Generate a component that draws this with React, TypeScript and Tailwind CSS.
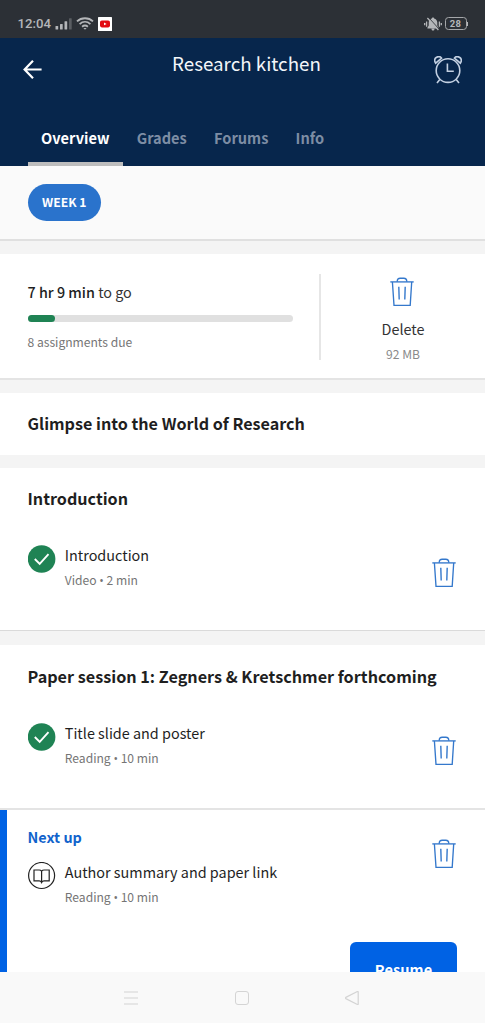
import { ReactNode } from 'react';

type IconProps = {
	className?: string;
};

const TrashIcon = ({ className = '' }: IconProps) => (
	<svg className={`w-6 h-7.5 shrink-0 ${className}`} viewBox="0 0 24 30" fill="none" stroke="#3478CC" strokeWidth="1.35">
		<path d="M0.3 4.9H23.7" />
		<path d="M2.4 5L4 28.4H20.2L21.7 5" />
		<path d="M7.2 4.7C7.2 2.3 8.3 1.2 10.2 1.2H13.8C15.7 1.2 16.8 2.3 16.8 4.7" />
		<path d="M8.8 9.8L9.2 22.6M15.2 9.8L14.8 22.6" strokeWidth="1.4" />
	</svg>
);

const CheckIcon = () => (
	<svg className="w-7 h-7 shrink-0" viewBox="0 0 28 28" fill="none">
		<circle cx="13.6" cy="14" r="13.8" fill="#1F8354" />
		<path d="M6.8 14L11.7 18.9L20.5 9.2" stroke="#fff" strokeWidth="1.9" />
	</svg>
);

const BookIcon = () => (
	<svg className="w-7 h-7 shrink-0" viewBox="0 0 28 28" fill="none" stroke="#222" strokeWidth="1.2">
		<circle cx="13.6" cy="13.5" r="13" />
		<path d="M13.6 9.1C13 8.3 12.2 8 11.1 8H6V18.8H11.1C12.3 18.8 13.1 19.4 13.6 20.5C14.1 19.4 14.9 18.8 16.1 18.8H21.2V8H16.1C15 8 14.2 8.3 13.6 9.1ZM13.6 9.1V20.5" />
	</svg>
);

const AlarmIcon = () => (
	<svg className="w-7 h-7" viewBox="0 0 28 28" fill="none" stroke="#C3D0E2" strokeWidth="1.6">
		<circle cx="14" cy="14.6" r="11.8" />
		<path d="M13.4 7.6V15.2H19.8" />
		<path d="M5.8 23.4L3 27M22.2 23.4L25 27" />
		<path d="M1.6 7.2C0.2 4.8 0.6 2.4 2.6 1.2C4.6 0.2 6.6 0.6 7.6 2.2Z" />
		<path d="M26.4 7.2C27.8 4.8 27.4 2.4 25.4 1.2C23.4 0.2 21.4 0.6 20.4 2.2Z" />
	</svg>
);

const StatusBar = () => (
	<div className="h-[38px] bg-[#2C3036] flex items-center justify-between pl-[17.5px] pr-[17.5px] pt-[9px] shrink-0">
		<div className="flex items-center">
			<span className="font-[Roboto] text-[13.2px] leading-4 font-medium text-[#B4B6B9] w-[33.5px] whitespace-nowrap">12:04</span>
			<svg className="w-[17px] h-3 ml-1" viewBox="0 0 17 12" fill="#B4B6B9">
				<rect x="0.5" y="8" width="2.7" height="3.5" rx="0.5" />
				<rect x="5" y="6" width="2.7" height="5.5" rx="0.5" />
				<rect x="9.5" y="3.3" width="2.7" height="8.2" rx="0.5" />
				<rect x="14" y="0.3" width="2.7" height="11.2" rx="0.5" fill="#5A5D62" />
			</svg>
			<svg className="w-[18px] h-[13px] ml-1" viewBox="0 0 18 13" fill="none" stroke="#B4B6B9" strokeWidth="1.8">
				<path d="M1 4.4C5.4 0.2 12.6 0.2 17 4.4" />
				<path d="M3.6 7.1C6.8 4.2 11.2 4.2 14.4 7.1" />
				<path d="M6.1 9.7C7.9 8.2 10.1 8.2 11.9 9.7" />
				<path d="M7.4 11L9 12.8L10.6 11Z" fill="#B4B6B9" stroke="none" />
			</svg>
			<svg className="w-3.5 h-3.5 ml-[4px]" viewBox="0 0 14 14">
				<rect width="14" height="14" rx="0.6" fill="#fff" />
				<rect x="2" y="3.4" width="10" height="7" rx="1.8" fill="#E20B12" />
				<path d="M6 5.5L8.6 6.9L6 8.3Z" fill="#fff" />
			</svg>
		</div>
		<div className="flex items-center">
			<svg className="w-[18px] h-3.5 mr-[3px]" viewBox="0 0 18 14">
				<path d="M9 0.5C9.7 0.5 10.1 0.9 10.1 1.4C12.1 1.9 13.3 3.5 13.3 5.6V8.6L14.6 10.8V11.4H3.4V10.8L4.7 8.6V5.6C4.7 3.5 5.9 1.9 7.9 1.4C7.9 0.9 8.3 0.5 9 0.5Z" fill="#B4B6B9" />
				<path d="M7.4 11.4H10.6C10.4 13 9.9 13.5 9 13.5C8.1 13.5 7.6 13 7.4 11.4Z" fill="#B4B6B9" />
				<path d="M0.7 6V8.3M2.6 4.6V9.7M15.4 4.6V9.7M17.3 6V8.3" stroke="#B4B6B9" strokeWidth="1.3" />
				<path d="M4.5 0.6L15.6 12.6" stroke="#2C3036" strokeWidth="1" />
				<path d="M3.4 1L14.4 13" stroke="#B4B6B9" strokeWidth="1.3" />
			</svg>
			<div className="w-[22px] h-[13px] border-[1.5px] border-[#A5A7AA] rounded-[3.5px] flex items-center justify-center font-[Roboto] text-[9.5px] leading-none font-bold tracking-[0.3px] text-[#B4B6B9]">
				28
			</div>
			<div className="w-px h-1 bg-[#B4B6B9]"></div>
		</div>
	</div>
);

const tabs = ['Overview', 'Grades', 'Forums', 'Info'];

const Header = () => (
	<header className="h-32 bg-[#07264C] flex flex-col justify-between shrink-0">
		<div className="flex justify-between items-start pl-[23px] pr-[23px] pt-3">
			<svg className="w-[19px] h-[19px] mt-[10px] mr-[17px]" viewBox="0 0 19 19" fill="none" stroke="#fff" strokeWidth="2.2">
				<path d="M18.6 9.5H2M10 0.8L1.6 9.5L10 18.2" />
			</svg>
			<h1 className="text-[18.75px] leading-[26px] text-[#F3F6FA] whitespace-nowrap">Research kitchen</h1>
			<div className="mt-[6px]">
				<AlarmIcon />
			</div>
		</div>
		<nav className="flex pl-[27.5px]">
			{tabs.map((tab, index) => (
				<a
					key={tab}
					className={`px-[13.6px] pb-[14px] text-[14.6px] leading-5 font-bold border-b-[4.5px] ${index === 0 ? 'text-white border-[#BDBDBD]' : 'text-[#7D8DA4] border-transparent'}`}
				>
					{tab}
				</a>
			))}
		</nav>
	</header>
);

type LessonProps = {
	icon: ReactNode;
	title: string;
	kind: string;
	duration: string;
};

const Lesson = ({ icon, title, kind, duration }: LessonProps) => (
	<div className="flex gap-[9.3px]">
		{icon}
		<div className="flex flex-col gap-[5px] whitespace-nowrap">
			<div className="text-[14.4px] leading-5 text-[#1F1F1F]">{title}</div>
			<div className="text-[12.1px] leading-5 text-[#757575]">
				{kind} <span className="font-['Open_Sans'] text-[12px] leading-none">•</span> {duration}
			</div>
		</div>
	</div>
);

export default function App() {
	const progress = 10.3;

	return (
		<div className="w-full h-[1023px] overflow-hidden flex flex-col bg-[#F4F4F4] font-['Noto_Sans_CJK_SC',sans-serif]">
			<StatusBar />
			<Header />

			<main className="flex-1 min-h-0 overflow-hidden">
				<div className="h-[75px] bg-[#FAFAFA] border-b-2 border-[#E0E0E0] pl-[27.5px] pt-[18px]">
					<button className="w-[73.5px] h-[36.5px] rounded-full bg-[#2A73CC] text-white text-[12.2px] leading-5 font-bold whitespace-nowrap">WEEK 1</button>
				</div>

				<section className="mt-[13px] h-[126px] bg-white border-b-2 border-[#E4E4E4] flex">
					<div className="w-[292.5px] pl-[27.5px] pt-7">
						<div className="text-[14.35px] leading-5 text-[#333] whitespace-nowrap">
							<span className="font-medium text-[#1F1F1F]">7 hr 9 min</span> to go
						</div>
						<div className="mt-[13px] h-[7px] w-[265px] rounded-full bg-[#E0E0E0]">
							<div className="h-full rounded-full bg-[#1F8354]" style={{ width: `${progress}%` }}></div>
						</div>
						<div className="mt-[10px] text-[12.1px] leading-5 text-[#757575]">8 assignments due</div>
					</div>
					<div className="ml-[26.5px] mt-5 w-0.5 h-[86px] bg-[#E6E6E6]"></div>
					<div className="flex-1 flex flex-col items-center pt-[22.5px]">
						<TrashIcon className="mr-[1.5px]" />
						<div className="mt-[12.5px] text-[14.4px] leading-5 text-[#333]">Delete</div>
						<div className="mt-[5px] text-[12.1px] leading-5 text-[#8A8A8A]">92 MB</div>
					</div>
				</section>

				<section className="mt-[13px] h-[61.5px] bg-white pl-[27.5px] pt-5">
					<h2 className="text-[16.15px] leading-5 font-bold text-[#1F1F1F]">Glimpse into the World of Research</h2>
				</section>

				<section className="mt-[13.5px] h-[163px] bg-white border-b border-[#DADADA] pl-[27.5px] pr-[29px] pt-5">
					<h2 className="text-[16.15px] leading-5 font-bold text-[#1F1F1F]">Introduction</h2>
					<div className="mt-[37px] flex justify-between">
						<Lesson icon={<CheckIcon />} title="Introduction" kind="Video" duration="2 min" />
						<TrashIcon className="mt-[13px]" />
					</div>
				</section>

				<section className="mt-3.5 h-[165px] bg-white border-b-2 border-[#E4E4E4] pl-[27.5px] pr-[29px] pt-[20.5px]">
					<h2 className="text-[16.2px] leading-5 font-bold text-[#1F1F1F] whitespace-nowrap">Paper session 1: Zegners &amp; Kretschmer forthcoming</h2>
					<div className="mt-[37px] flex justify-between">
						<Lesson icon={<CheckIcon />} title="Title slide and poster" kind="Reading" duration="10 min" />
						<TrashIcon className="mt-[13px]" />
					</div>
				</section>

				<section className="h-[200px] bg-white border-l-[7px] border-[#0062E4] pl-[20.5px] pr-[28px] pt-[17px]">
					<div className="flex justify-between">
						<div>
							<div className="text-[14.4px] leading-5 font-bold text-[#1163CC]">Next up</div>
							<div className="mt-[14.5px]">
								<Lesson icon={<BookIcon />} title="Author summary and paper link" kind="Reading" duration="10 min" />
							</div>
						</div>
						<TrashIcon className="mt-3 mr-px" />
					</div>
					<div className="mt-[35.5px] flex justify-end">
						<button className="w-[107px] h-14 rounded-md bg-[#0062E4] text-white text-[14.6px] leading-5 font-bold">Resume</button>
					</div>
				</section>
			</main>

			<footer className="h-[51px] bg-[#F9F9F9] shrink-0 flex items-center justify-between pl-[124px] pr-[126px]">
				<svg className="w-3.5 h-3.5" viewBox="0 0 14 14" stroke="#D4D4D4" strokeWidth="1.2">
					<path d="M0 1H14M0 7H14M0 13H14" />
				</svg>
				<div className="w-3.5 h-3.5 ml-px border border-[#D4D4D4] rounded-[3px]"></div>
				<svg className="w-3.5 h-3.5" viewBox="0 0 14 14" fill="none" stroke="#D4D4D4" strokeWidth="1.2" strokeLinejoin="round">
					<path d="M0.8 6.4L12.4 0.5Q13.2 0.2 13.2 1.1V12.9Q13.2 13.8 12.4 13.5L0.8 7.6Q0.2 7 0.8 6.4Z" />
				</svg>
			</footer>
		</div>
	);
}
